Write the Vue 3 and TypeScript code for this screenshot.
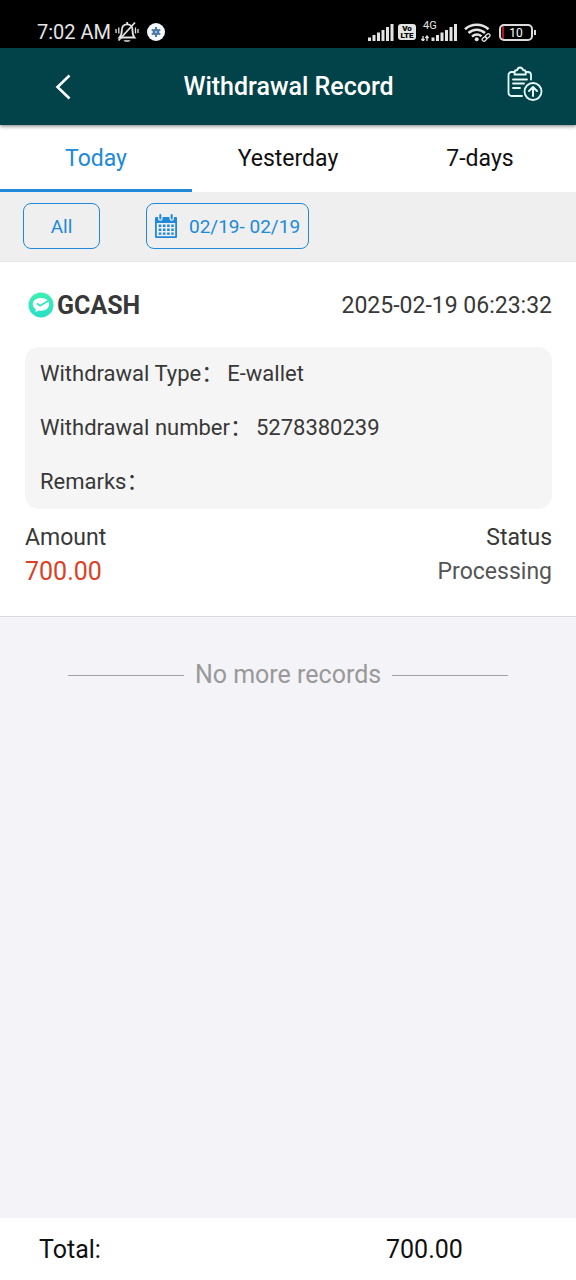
<script setup lang="ts">
import { ref } from 'vue'

interface Field {
  label: string
  value: string
}

interface WithdrawalRecord {
  id: number
  channel: string
  time: string
  fields: Field[]
  amount: string
  status: string
}

const tabs: string[] = ['Today', 'Yesterday', '7-days']
const activeTab = ref<string>('Today')

const records: WithdrawalRecord[] = [
  {
    id: 1,
    channel: 'GCASH',
    time: '2025-02-19 06:23:32',
    fields: [
      { label: 'Withdrawal Type', value: 'E-wallet' },
      { label: 'Withdrawal number', value: '5278380239' },
      { label: 'Remarks', value: '' },
    ],
    amount: '700.00',
    status: 'Processing',
  },
]

const total = '700.00'
</script>

<template>
  <div class="page">
    <div class="status-bar">
      <div class="status-left">
        <span class="clock">7:02 AM</span>
        <svg class="bell" width="24" height="22" viewBox="0 0 24 22" fill="none" stroke="#e4e4e4" stroke-width="1.800">
          <path d="M4.500 16.500h15c-1.800-2-2-3.500-2-7 0-3.500-1.700-6.200-5.300-6.200S6.800 6 6.800 9.500c0 3.300-.3 5-2.300 7z" />
          <path d="M12.200 1v2" />
          <path d="M3.500 19.500L20 1.500" />
          <path d="M8.500 19.300h7c-.8 2-6.200 2-7 0z" fill="#e4e4e4" stroke="none" />
          <path d="M1 8v4M3.800 6.500v6M20.500 6.500v6M23 8v4" stroke-width="1.300" />
        </svg>
        <svg class="gear" width="18" height="18" viewBox="0 0 18 18">
          <circle cx="9" cy="9" r="9" fill="#f5f8fa" />
          <path d="M9 4v10M4.700 6.500l8.600 5M4.700 11.500l8.600-5" stroke="#4f7898" stroke-width="2" />
          <circle cx="9" cy="9" r="3.300" fill="#4479a8" />
          <circle cx="9" cy="9" r="1.200" fill="#8fc3ea" />
        </svg>
      </div>
      <div class="status-right">
        <svg width="26" height="17" viewBox="0 0 26 17" fill="#e4e4e4">
          <path d="M0 13.500h3V17H0zM4.500 11h3v6h-3zM9 8.500h3V17H9zM13.500 6h3v11h-3zM18 3h3v14h-3zM22.500 0h3v17h-3z" />
        </svg>
        <span class="volte"><span>Vo</span><span>LTE</span></span>
        <span class="mobile">
          <span class="network">4G</span>
          <svg width="36" height="17" viewBox="0 0 36 17" fill="#e4e4e4">
            <path d="M2 12v5M.5 15L2 17l1.500-2M6 17v-5M4.500 14L6 12l1.500 2" fill="none" stroke="#e4e4e4" stroke-width="1.300" />
            <path d="M10.500 13.500h3V17h-3zM15 11h3v6h-3zM19.500 8.500h3V17h-3zM24 6h3v11h-3zM28.500 3h3v14h-3zM33 0h3v17h-3z" />
          </svg>
        </span>
        <svg class="wifi" width="27" height="19" viewBox="0 0 27 19" fill="none" stroke="#e4e4e4" stroke-width="2.600">
          <path d="M1 6.200c6.500-6 17-6 23.500 0M4.500 10c4.800-4.300 11.600-4.300 16.500 0M8 13.500c3-2.500 6.500-2.500 9.500-.300" />
          <circle cx="12.700" cy="16.300" r="2" fill="#e4e4e4" stroke="none" />
          <g stroke-width="1.300">
            <rect x="18" y="14.300" width="5" height="3.400" rx="1.700" transform="rotate(-42 20.500 16)" />
            <rect x="21.200" y="11.300" width="5" height="3.400" rx="1.700" transform="rotate(-42 23.700 13)" />
          </g>
        </svg>
        <span class="battery"><span class="battery-body">10</span><span class="battery-tip"></span></span>
      </div>
    </div>

    <header class="header">
      <button class="icon-button back" type="button" aria-label="Back">
        <svg width="16" height="26" viewBox="0 0 16 26" fill="none" stroke="#fff" stroke-width="2.600">
          <path d="M14.500 1.500L2.500 13l12 11.500" />
        </svg>
      </button>
      <h1>Withdrawal Record</h1>
      <button class="icon-button submit" type="button" aria-label="Submit record">
        <svg width="36" height="36" viewBox="0 0 36 36" fill="none" stroke="#e6fafa" stroke-width="1.800" stroke-linecap="round" stroke-linejoin="round">
          <path d="M7.500 6H4.500A3 3 0 0 0 1.500 9v18a3 3 0 0 0 3 3h10.500" />
          <path d="M19 6h2a3 3 0 0 1 3 3v4.500" />
          <path d="M7.500 8.500V6.500c0-1.500 1-2.500 2.800-2.500C10.700 2.300 11.500 1.500 13 1.500S15.500 2.300 16 4c1.800 0 2.800 1 2.800 2.500v2z" />
          <path d="M6 13.500h14M6 17.500h11M6 22h7" />
          <circle cx="26" cy="25.500" r="8.500" />
          <path d="M26 30v-8.500M22 25l4-4 4 4" stroke-width="2" />
        </svg>
      </button>
    </header>

    <nav class="tabs">
      <button
        v-for="tab in tabs"
        :key="tab"
        type="button"
        class="tab"
        :class="{ active: tab === activeTab }"
        @click="activeTab = tab"
      >
        {{ tab }}
      </button>
    </nav>

    <div class="filters">
      <button class="filter filter-type" type="button">All</button>
      <button class="filter filter-date" type="button">
        <svg width="22" height="24" viewBox="0 0 22 24">
          <path
            fill="#2089d9"
            fill-rule="evenodd"
            d="M1 3h2v1.500a2.300 2.300 0 0 0 4.600 0V3h6.800v1.500a2.300 2.300 0 0 0 4.600 0V3h2a1 1 0 0 1 1 1v19a1 1 0 0 1-1 1H1a1 1 0 0 1-1-1V4a1 1 0 0 1 1-1zM1.800 9v13.200h18.400V9z"
          />
          <path stroke="#2089d9" stroke-width="2" stroke-linecap="round" d="M5.300 1v3.500M16.700 1v3.500" />
          <path stroke="#2089d9" stroke-width="2.400" stroke-dasharray="2.600 1.600" d="M3.700 11.800h15M3.700 15.700h15M3.700 19.600h15" />
        </svg>
        <span>02/19- 02/19</span>
      </button>
    </div>

    <main class="list">
      <article v-for="record in records" :key="record.id" class="record">
        <div class="record-head">
          <svg width="26" height="26" viewBox="0 0 26 26">
            <defs>
              <linearGradient id="badge" x1="0" y1="0" x2="0" y2="1">
                <stop offset="0" stop-color="#3df0b0" />
                <stop offset="1" stop-color="#28dfc8" />
              </linearGradient>
            </defs>
            <circle cx="13" cy="13" r="12.500" fill="url(#badge)" />
            <path fill="#fff" d="M13 6c4.700 0 8.200 2.500 8.200 6.200s-3.500 6.500-8.200 6.500c-.8 0-1.500 0-2.200-.2L7.500 20l.3-2.800c-2-1.200-3-2.900-3-5C4.800 8.500 8.300 6 13 6z" />
            <path d="M9 11.500l3 2.200 8.500-5" fill="none" stroke="#2ee6bd" stroke-width="1.600" />
          </svg>
          <h2>{{ record.channel }}</h2>
          <time>{{ record.time }}</time>
        </div>
        <dl class="details">
          <div v-for="field in record.fields" :key="field.label">
            <dt>{{ field.label }}：</dt>
            <dd>{{ field.value }}</dd>
          </div>
        </dl>
        <dl class="summary">
          <div>
            <dt>Amount</dt>
            <dd class="amount">{{ record.amount }}</dd>
          </div>
          <div class="status">
            <dt>Status</dt>
            <dd>{{ record.status }}</dd>
          </div>
        </dl>
      </article>
      <p class="end">No more records</p>
    </main>

    <footer class="footer">
      <span class="total-label">Total:</span>
      <span class="total-value">{{ total }}</span>
    </footer>
  </div>
</template>

<style>
body {
  margin: 0;
}
</style>

<style scoped>
.page {
  display: flex;
  flex-direction: column;
  min-height: 100vh;
  background: #f3f3f8;
  color: #383838;
  font-family: Roboto, "Noto Sans CJK SC", sans-serif;
  font-size: 23px;
}

.page * {
  box-sizing: border-box;
}

svg {
  display: block;
  flex: none;
}

button {
  padding: 0;
  border: 0;
  background: none;
  color: inherit;
  font: inherit;
  cursor: pointer;
}

h1,
h2,
p,
dl,
dd {
  margin: 0;
}

.status-bar {
  display: flex;
  align-items: flex-end;
  justify-content: space-between;
  height: 48px;
  padding: 0 40px 6px 37px;
  background: #000;
  color: #e4e4e4;
}

.status-left,
.status-right {
  display: flex;
  align-items: center;
  height: 20px;
}

.clock {
  font-size: 20px;
  line-height: 20px;
}

.bell {
  margin: 0 8px 0 4px;
}

.volte {
  display: flex;
  flex-direction: column;
  align-items: center;
  justify-content: center;
  width: 18px;
  height: 16px;
  margin: 0 5px 0 4px;
  border-radius: 3px;
  background: #e4e4e4;
  color: #000;
  font-size: 8px;
  font-weight: 900;
  line-height: 7px;
}

.mobile {
  position: relative;
}

.network {
  position: absolute;
  top: -3px;
  left: 2px;
  font-size: 11px;
  line-height: 10px;
}

.wifi {
  margin: 0 8px 0 7px;
}

.battery {
  display: flex;
  align-items: center;
  gap: 1px;
}

.battery-body {
  width: 34px;
  height: 17px;
  border: 2px solid #dcdcdc;
  border-radius: 5px;
  background: linear-gradient(90deg, #000 1px, #b3161c 1px, #b3161c 3px, #000 3px);
  color: #fff;
  font-size: 12px;
  line-height: 14px;
  text-align: center;
}

.battery-tip {
  width: 2px;
  height: 5px;
  background: #dcdcdc;
}

.header {
  position: relative;
  display: grid;
  grid-template-columns: 1fr auto 1fr;
  align-items: center;
  height: 77px;
  padding: 0 26px 0 27px;
  background: #014349;
  box-shadow: 0 1px 4px rgba(0, 0, 0, 0.55);
  color: #fff;
}

.header h1 {
  font-size: 25px;
  font-weight: 500;
  line-height: 28px;
}

.icon-button {
  display: flex;
  align-items: center;
  justify-content: center;
  height: 48px;
}

.back {
  width: 72px;
}

.submit {
  width: 50px;
  justify-self: end;
  padding-bottom: 5px;
}

.tabs {
  display: flex;
  background: #fff;
}

.tab {
  flex: 1;
  height: 67px;
  padding-top: 3px;
  border-bottom: 3px solid transparent;
  color: #101010;
  font-size: 23px;
}

.tab.active {
  border-color: #2089d9;
  color: #2089d9;
}

.filters {
  display: flex;
  gap: 46px;
  padding: 11px 23px 12px;
  border-bottom: 1px solid #e6e6e6;
  background: #efefef;
}

.filter {
  display: flex;
  align-items: center;
  justify-content: center;
  height: 46px;
  border: 1px solid #2089d9;
  border-radius: 8px;
  color: #2089d9;
  font-size: 19px;
}

.filter-type {
  width: 77px;
}

.filter-date {
  gap: 12px;
  padding: 0 8px;
}

.list {
  flex: 1;
}

.record {
  padding: 23px 24px 27px 25px;
  border-bottom: 1px solid #d8d8dc;
  background: #fff;
}

.record-head {
  display: flex;
  align-items: center;
  gap: 3px;
  height: 40px;
  margin-bottom: 22px;
  padding-left: 3px;
}

.record-head h2 {
  font-size: 25px;
  font-weight: 700;
}

.record-head time {
  margin-left: auto;
}

.details {
  padding-left: 15px;
  border-radius: 14px;
  background: #f5f5f5;
  font-size: 22px;
  line-height: 54px;
}

.details div {
  display: flex;
  gap: 4px;
  height: 54px;
}

.summary {
  display: flex;
  justify-content: space-between;
  margin-top: 12px;
  line-height: 34px;
}

.summary dd {
  color: #555;
}

.summary .amount {
  color: #dc3f25;
  font-size: 25px;
}

.status {
  text-align: right;
}

.end {
  display: flex;
  align-items: center;
  gap: 11px;
  padding: 43px 68px;
  color: #999;
  font-size: 25px;
  line-height: 30px;
}

.end::before,
.end::after {
  content: "";
  flex: 1;
  height: 1px;
  background: #a3a3a6;
}

.footer {
  display: flex;
  align-items: center;
  height: 62px;
  padding-left: 39px;
  background: #fff;
  color: #101010;
  font-size: 25px;
}

.total-label {
  flex: 1;
}

.total-value {
  flex: 0 0 190px;
}
</style>
